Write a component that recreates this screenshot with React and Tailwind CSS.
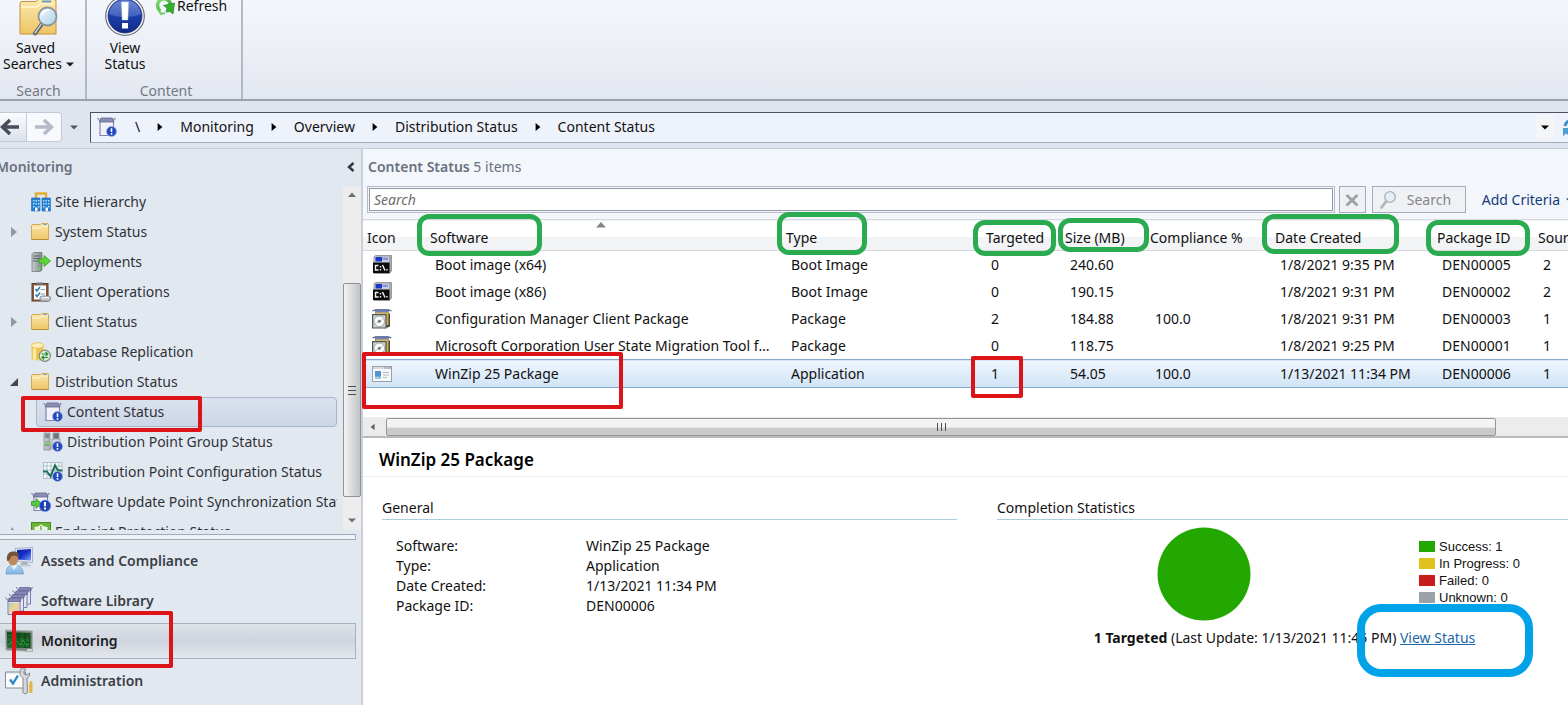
import React from "react";

/* ---------- shared defs and icons ---------- */

const IconDefs = () => (
  <svg className="absolute h-0 w-0" aria-hidden="true">
    <defs>
      <linearGradient id="folder" x1="0" y1="0" x2="0" y2="1">
        <stop offset="0" stopColor="#fbe9ac" />
        <stop offset="1" stopColor="#eec565" />
      </linearGradient>
      <linearGradient id="blueball" x1="0" y1="0" x2="0" y2="1">
        <stop offset="0" stopColor="#4c6fce" />
        <stop offset="0.5" stopColor="#1c3fae" />
        <stop offset="1" stopColor="#12297f" />
      </linearGradient>
      <linearGradient id="metal" x1="0" y1="0" x2="1" y2="0">
        <stop offset="0" stopColor="#c9cdd0" />
        <stop offset="1" stopColor="#7d8587" />
      </linearGradient>
      <linearGradient id="lens" x1="0" y1="0" x2="1" y2="1">
        <stop offset="0" stopColor="#f4fbff" />
        <stop offset="1" stopColor="#a9cfe6" />
      </linearGradient>
      <linearGradient id="green" x1="0" y1="0" x2="1" y2="1">
        <stop offset="0" stopColor="#8fe07a" />
        <stop offset="1" stopColor="#239c1c" />
      </linearGradient>
      <linearGradient id="screen" x1="0" y1="0" x2="1" y2="1">
        <stop offset="0" stopColor="#0a1c9c" />
        <stop offset="0.5" stopColor="#1730cc" />
        <stop offset="1" stopColor="#7fa6f6" />
      </linearGradient>
      <linearGradient id="shirt" x1="0" y1="0" x2="0" y2="1">
        <stop offset="0" stopColor="#b4d8f2" />
        <stop offset="1" stopColor="#7db2e2" />
      </linearGradient>
    </defs>
  </svg>
);

const Svg = ({ size = "h-5 w-5", box = "0 0 20 20", children }) => (
  <svg className={`${size} shrink-0`} viewBox={box} aria-hidden="true">
    {children}
  </svg>
);

const Badge = ({ cx = 14.5, cy = 14.5 }) => (
  <g>
    <circle cx={cx} cy={cy} r="5" fill="#2349bd" stroke="#9fb2e2" strokeWidth="0.7" />
    <path d={`M${cx} ${cy - 3.2}v3.6M${cx} ${cy + 1.6}v1.6`} stroke="#fff" strokeWidth="1.6" />
  </g>
);

const SiteIcon = () => (
  <Svg>
    <path d="M5 6V1.5h10V6" fill="none" stroke="#e0ae35" strokeWidth="2.4" />
    <path d="M0.5 6H9v13H0.5zM11 6h8.5v13H11z" fill="#2382d3" stroke="#1b66b0" strokeWidth="0.6" />
    <path d="M2 8h1.5v1.5H2zM4.5 8H6v1.5H4.5zM7 8h1.5v1.5H7zM2 11h1.5v1.5H2zM4.5 11H6v1.5H4.5zM7 11h1.5v1.5H7zM2 14h1.5v1.5H2zM7 14h1.5v1.5H7zM12 8h1.5v1.5H12zM14.5 8H16v1.5h-1.5zM17 8h1.5v1.5H17zM12 11h1.5v1.5H12zM14.5 11H16v1.5h-1.5zM17 11h1.5v1.5H17zM12 14h1.5v1.5H12zM17 14h1.5v1.5H17z" fill="#a9dcfa" />
    <path d="M4 15.500h2.500V19H4zM14.500 15.500H17V19h-2.500z" fill="#f4f8fc" />
  </Svg>
);

const FolderIcon = () => (
  <Svg>
    <path d="M0.500 4l1-1.500h8L10.500 1.500h6.500l0.500 1V17.500H0.500z" fill="url(#folder)" stroke="#cfa04a" strokeWidth="0.9" />
    <path d="M1 6h8l2-2h6" fill="none" stroke="#fff6d2" strokeWidth="1" />
    <path d="M12 2.600h4" stroke="#7ea6c4" strokeWidth="1.100" />
    <path d="M1 17.500h16.500" stroke="#b98c3b" />
  </Svg>
);

const DeployIcon = () => (
  <Svg>
    <path d="M1 2l2-1.500h8V18L9 19.500H1z" fill="url(#metal)" stroke="#767e80" strokeWidth="0.800" />
    <path d="M2 4h7M2 6.500h7M2 9h7" stroke="#5f6769" strokeWidth="1" />
    <circle cx="8" cy="16.500" r="1.200" fill="#66e234" />
    <path d="M8 7h5V3.500l6.500 5.500L13 14.500V11H8z" fill="#5fd636" stroke="#38a521" strokeWidth="0.900" />
  </Svg>
);

const ClipboardIcon = () => (
  <Svg>
    <rect x="1" y="1.500" width="16" height="17.500" fill="#8b5d40" stroke="#5f3b28" />
    <rect x="3" y="3.500" width="12" height="14" fill="#fbfcfd" />
    <path d="M6 0.500h6v2.500H6z" fill="#71777c" />
    <path d="M4.500 7l1.500 2 3-4M4.500 12.500l1.500 2 3-4" fill="none" stroke="#2b7cb5" strokeWidth="1.500" />
    <path d="M9.500 7.500H14M9.500 12H14" stroke="#90a4b0" />
    <rect x="9" y="14" width="10.500" height="5" rx="2" fill="#c6c9cc" stroke="#75797d" strokeWidth="0.800" />
    <path d="M10.500 15.500h7.500" stroke="#f5f6f6" />
  </Svg>
);

const DatabaseIcon = () => (
  <Svg>
    <path d="M0.500 3.500v12.500c0 3.200 12 3.200 12 0V3.500z" fill="#f0c750" />
    <path d="M2 5v12c1 .6 2 .9 3 1V6z" fill="#fbe9a4" />
    <ellipse cx="6.500" cy="3.500" rx="6" ry="2.800" fill="#fdf0b8" stroke="#e0b341" strokeWidth="0.700" />
    <circle cx="13.800" cy="13.800" r="5.600" fill="#dfeddc" stroke="#7b8a7a" strokeWidth="1.200" />
    <path d="M10.500 12h5.500M14.500 10l2.300 2-2.300 2M17 15.500h-5.500M13 13.700l-2 1.800 2 2" fill="none" stroke="#2c8c2e" strokeWidth="1.200" />
  </Svg>
);

const BoxShape = () => (
  <g>
    <path d="M0.500 1L4 5M18.500 1L15 5" stroke="#70709a" strokeWidth="1.100" />
    <path d="M3 4.500h13.500v14H3z" fill="#f2f2fa" stroke="#8585ac" strokeWidth="1.200" />
    <path d="M4 1h11.500l1.500 4H2.500z" fill="#8c8cb5" stroke="#67678f" strokeWidth="0.800" />
  </g>
);

const ContentStatusIcon = () => (
  <Svg>
    <BoxShape />
    <Badge />
  </Svg>
);

const GroupStatusIcon = () => (
  <Svg>
    <path d="M1 1h6v9H1zM10 1h6v9h-6zM1 11h6.500v7H1z" fill="url(#metal)" stroke="#7d8587" strokeWidth="0.700" />
    <path d="M2 3h4M2 5h4M11 3h4M11 5h4M2 13h4" stroke="#4f5658" />
    <path d="M1 10h7v3H1z" fill="#84c77a" />
    <path d="M9 7h8v10H9z" fill="#d4d8dc" stroke="#8d969b" strokeWidth="0.800" />
    <Badge />
  </Svg>
);

const ConfigStatusIcon = () => (
  <Svg>
    <path d="M0.500 0.500h18.500v16H0.500z" fill="#f5f9fa" stroke="#9fb4bd" strokeWidth="0.800" />
    <path d="M4 .5v16M8 .5v16M12 .5v16M16 .5v16M.5 4h18.500M.5 8h18.500M.5 12h18.500" stroke="#9fb8c1" strokeWidth="0.800" />
    <path d="M0 9.500h4l3.500 5L12 3.500l3 5h4.500" fill="none" stroke="#1f6f58" strokeWidth="2" />
    <Badge />
  </Svg>
);

const SyncStatusIcon = () => (
  <Svg>
    <BoxShape />
    <path d="M0.500 9.500h4.500V6.500l5.500 5-5.500 5v-3H0.500z" fill="#56ca3c" stroke="#2f9824" strokeWidth="0.800" />
    <circle cx="14" cy="13.800" r="5.800" fill="#1f45b8" stroke="#7f98dc" strokeWidth="0.700" />
    <path d="M14 10v4.300M14 15.600v1.900" stroke="#fff" strokeWidth="2" />
  </Svg>
);

const EndpointIcon = () => (
  <Svg>
    <rect x="0.500" y="0.500" width="19" height="19" fill="#6cb33a" stroke="#478c22" />
    <path d="M3.500 5c3 0 5-1.500 6.500-2.500C11.500 3.500 13.500 5 16.500 5v7c0 4-6.500 6-6.500 6s-6.500-2-6.500-6z" fill="#eef7e6" />
    <path d="M10 4v14M4 10h12" stroke="#6cb33a" strokeWidth="1.500" />
  </Svg>
);

const BootIcon = () => (
  <Svg>
    <path d="M2 1.500L4 0.500h15.500V16l-2 2.500H2z" fill="#a5a9ae" stroke="#7c8085" strokeWidth="0.700" />
    <path d="M2.500 1.500h14.500v7H2.500z" fill="#c9cedb" />
    <path d="M3.500 2H10v4.500H3.500z" fill="#1c36c4" />
    <path d="M10.500 2.500H16v2.500h-5.500z" fill="#8494d8" />
    <path d="M1 7.500h16.500v10.500H1z" fill="#0a0a0a" />
    <path d="M6.500 10.500H3.500v4.500h3M8.500 11v1.500M8.500 14v1.500M10.500 10l2.500 5.500M15 14v1.500" fill="none" stroke="#f3f3f3" strokeWidth="1.400" />
  </Svg>
);

const PackageIcon = () => (
  <Svg>
    <path d="M0.500 2l3-1.200h13l3 1.200" fill="none" stroke="#56628c" strokeWidth="1.300" />
    <path d="M3.500 1h13v7h-13z" fill="#7486b8" stroke="#5a6892" strokeWidth="0.700" />
    <path d="M13.500 4.500h4.500V17.500L14.500 19z" fill="#3f4c48" />
    <path d="M14 3.500h2.500V16H14z" fill="#d9a93c" />
    <path d="M3.500 3.500h13v2h-13z" fill="#d9b75a" />
    <path d="M0.600 5.600h13.400v13.400H0.600z" fill="#cdd3d1" stroke="#4f5956" strokeWidth="1.200" />
    <circle cx="7.300" cy="12.300" r="5.300" fill="#fafbfb" stroke="#94a09d" strokeWidth="0.800" />
    <path d="M7.300 12.300l4.500-2.500M7.300 12.300L3 15" stroke="#bcd6c8" />
    <circle cx="7.300" cy="12.300" r="1.500" fill="#6f7978" />
  </Svg>
);

const AppIcon = () => (
  <Svg>
    <rect x="0.500" y="2.500" width="19" height="15" fill="#f6f8fa" stroke="#9aa1a9" />
    <path d="M1 4h18" stroke="#d4d9de" strokeWidth="2" />
    <path d="M12.500 4h1.500M15 4h1.500M17.500 4H19" stroke="#7b838c" />
    <rect x="3" y="7" width="6" height="8" fill="#4c94c9" />
    <path d="M3 12.500h6V15H3z" fill="#9cc6e2" />
    <path d="M11 8.500h6M11 11h6M11 13.500h4" stroke="#b6bdc4" />
  </Svg>
);

const AssetsIcon = () => (
  <Svg size="h-7 w-7" box="0 0 28 28">
    <path d="M10 1.500L27.500 0.500V15.500L12 14z" fill="#e2e7f2" stroke="#9ba6bc" strokeWidth="0.800" />
    <path d="M12 3l14-1V13.500L12 12.500z" fill="url(#screen)" />
    <path d="M17 15h5l1 3h-8z" fill="#a8afbd" />
    <path d="M15 18.500h11" stroke="#c5cad4" strokeWidth="2" />
    <path d="M1 27c0-7 3-9 8-9 6 0 9 3 9.500 9z" fill="url(#shirt)" stroke="#6b9cc9" strokeWidth="0.700" />
    <path d="M6 18l3 5 3.500-5z" fill="#eaf4fc" />
    <ellipse cx="8" cy="12" rx="5.200" ry="6.500" fill="#bd895d" />
    <path d="M2 14C1 6.500 4.500 4.500 8.500 4.500c4 0 6 2.500 5 6-2.500-2-5.500-2.500-7.500-1-.5 3-2 4-4 4.500z" fill="#74523d" />
  </Svg>
);

const LibraryBox = ({ x, y }) => (
  <g transform={`translate(${x} ${y})`}>
    <path d="M0 0l3 3.500M16.500 0l-2 3.500" stroke="#6f6f9c" />
    <path d="M2.500 3.500h12V17h-12z" fill="#e4e4f3" stroke="#7d7daa" />
    <path d="M3.500 0.500h11l.5 3.500H2.500z" fill="#8585b4" stroke="#5e5e90" strokeWidth="0.700" />
  </g>
);

const LibraryIcon = () => (
  <Svg size="h-7 w-7" box="0 0 28 28">
    <LibraryBox x={11} y={0} />
    <LibraryBox x={7.500} y={3.500} />
    <LibraryBox x={4} y={7} />
    <LibraryBox x={0.500} y={10.500} />
    <path d="M4 16h10v10l-5-3-5 4z" fill="#eacf9c" />
    <path d="M4 16h5l-5 6z" fill="#b5d6a4" />
  </Svg>
);

const MonitorIcon = () => (
  <Svg size="h-7 w-7" box="0 0 28 28">
    <path d="M0.500 3l27 1v20.500L1 23z" fill="#7c8580" stroke="#a9b1ad" />
    <path d="M2 5l23.500 1v15L2.500 20.500z" fill="#155021" />
    <path d="M3 8l5-1v4l4-2v6l5-7 2 4 5-4v12H3z" fill="#1f7a30" opacity="0.700" />
    <path d="M8 5v15.500M14 5.500v15M20 6v15M2 10h23.500M2 15.500h23.500" stroke="#123f1a" strokeWidth="0.800" />
    <path d="M3 18l3-3 2 3 4-4 3 4 3-5 3 5 3-2" fill="none" stroke="#2f9a3f" strokeWidth="1" />
    <path d="M22 23h5" stroke="#e8ecea" strokeWidth="1.500" />
  </Svg>
);

const AdminIcon = () => (
  <Svg size="h-7 w-7" box="0 0 28 28">
    <path d="M0.500 5h20v16h-20z" fill="#fafcfd" stroke="#858c94" />
    <path d="M1 5.500h19" stroke="#b6bdc5" strokeWidth="1.600" />
    <path d="M5 12.500l3 4 5-8" fill="none" stroke="#2b86c4" strokeWidth="2.300" />
    <path d="M26 14c2 0 1.500 3 1.500 12h-3c-.5-7-.5-12 1.500-12z" fill="#e6b441" />
    <path d="M16 2c2-1.500 4-1 5 .5l-2 1.500v3l3 1 2.500-2c.5 3-1 4.500-2.500 5l.5 14.500c-1 1.700-4 1.700-4.500 0L18 11c-3-1.500-4-5-2-9z" fill="#d5d7da" stroke="#797d83" strokeWidth="0.900" />
  </Svg>
);

const SavedSearchIcon = () => (
  <Svg size="h-10 w-10" box="0 0 40 40">
    <path d="M1 8l1-2.500h15L19 3h17l1 2v33H1z" fill="url(#folder)" stroke="#c3933d" />
    <path d="M2 11h16l3-3h15" fill="none" stroke="#fff6cf" strokeWidth="1.500" />
    <path d="M23 5.500h9" stroke="#6f9dc0" strokeWidth="2" />
    <path d="M22.500 28.500L16 37.500" stroke="#5e6468" strokeWidth="4" strokeLinecap="round" />
    <path d="M22 28.500L16 37" stroke="#c6ccd0" strokeWidth="1.500" strokeLinecap="round" />
    <circle cx="28.500" cy="20.500" r="9" fill="url(#lens)" stroke="#8a959c" strokeWidth="1.800" />
    <path d="M23 19c1-4 4-5 7-5" fill="none" stroke="#fff" strokeWidth="1.800" />
  </Svg>
);

const BigStatusIcon = () => (
  <Svg size="h-10 w-10" box="0 0 40 40">
    <circle cx="20" cy="20" r="19.300" fill="#fafbfd" stroke="#6b6f78" strokeWidth="1.200" />
    <circle cx="20" cy="20" r="17" fill="url(#blueball)" stroke="#1a2f78" strokeWidth="0.800" />
    <path d="M4 18C6 8 12 4.500 20 4.500S34 8 36 18c-8 4-24 4-32 0z" fill="#fff" opacity="0.180" />
    <path d="M16.500 6h7L22.800 24h-5.600z" fill="#fff" stroke="#cfd6ea" strokeWidth="0.500" />
    <rect x="17" y="27" width="6" height="5.500" fill="#fff" />
  </Svg>
);

const RefreshGreen = () => (
  <Svg>
    <path d="M5 15C1.500 11.500 1.500 6 6 3.500c4-2 8.500 0 9.500 5" fill="none" stroke="url(#green)" strokeWidth="3.500" />
    <path d="M8.500 9.500L19.500 7l-1.500 11-3-2.500-4 .5 1-4z" fill="#35ae2c" stroke="#1e8c1c" strokeWidth="0.700" />
    <path d="M3 13l3 5 4-1" fill="none" stroke="#74cf62" strokeWidth="2" />
  </Svg>
);

const RefreshBlue = () => (
  <Svg>
    <path d="M3 9C4 4 9 2 14 4" fill="none" stroke="#3d8fc9" strokeWidth="3" />
    <path d="M1 11h8l-3 3c3 3 7 3 10 1v3c-5 2-9 1-12-1.500L1 19z" fill="#4b9fd4" />
  </Svg>
);

const Arrow = ({ dir, color = "#1b1b1b", size = "h-2 w-2" }) => {
  const d = {
    right: "M2 0l6 5-6 5z",
    down: "M0 3h10L5 8z",
    up: "M0 7.500h10L5 2z",
    left: "M7 1L2 5l5 4z",
    corner: "M9 1v8H1z",
  }[dir];
  return (
    <Svg size={size} box="0 0 10 10">
      <path d={d} fill={color} />
    </Svg>
  );
};

/* hand-drawn highlight frames laid over the content */
const Mark = ({ className }) => (
  <span aria-hidden="true" className={`pointer-events-none absolute z-10 ${className}`} />
);
const GREEN = "rounded-xl border-[5px] border-[#2aab50]";
const RED = "rounded-xs border-4 border-[#dc1418]";

/* ---------- data ---------- */

const tree = [
  { label: "Site Hierarchy", icon: SiteIcon },
  { label: "System Status", icon: FolderIcon, arrow: "right" },
  { label: "Deployments", icon: DeployIcon },
  { label: "Client Operations", icon: ClipboardIcon },
  { label: "Client Status", icon: FolderIcon, arrow: "right" },
  { label: "Database Replication", icon: DatabaseIcon },
  { label: "Distribution Status", icon: FolderIcon, arrow: "corner" },
  { label: "Content Status", icon: ContentStatusIcon, child: true, selected: true },
  { label: "Distribution Point Group Status", icon: GroupStatusIcon, child: true },
  { label: "Distribution Point Configuration Status", icon: ConfigStatusIcon, child: true },
  { label: "Software Update Point Synchronization Status", icon: SyncStatusIcon },
  { label: "Endpoint Protection Status", icon: EndpointIcon, arrow: "right" },
];

const spaces = [
  { label: "Assets and Compliance", icon: AssetsIcon },
  { label: "Software Library", icon: LibraryIcon },
  { label: "Monitoring", icon: MonitorIcon, selected: true },
  { label: "Administration", icon: AdminIcon },
];

const columns = [
  { label: "Icon", width: "w-[60px]" },
  { label: "Software", width: "w-[356px]", mark: "-left-1.5 -top-1.5 h-[42px] w-[125px]", sorted: true },
  { label: "Type", width: "w-[200px]", mark: "-left-0.5 -top-2 h-[43px] w-[90px]" },
  { label: "Targeted", width: "w-[79px]", mark: "-left-1.5 top-0 h-9 w-[83px]" },
  { label: "Size (MB)", width: "w-[85px]", mark: "left-0 -top-0.5 h-[34px] w-[91px]" },
  { label: "Compliance %", width: "w-[125px]" },
  { label: "Date Created", width: "w-[162px]", mark: "-left-1.5 -top-1.5 h-10 w-[137px]" },
  { label: "Package ID", width: "w-[101px]", mark: "-left-1 top-0 h-9 w-[104px]" },
  { label: "Source Version", width: "w-[120px]" },
];

const rows = [
  [BootIcon, "Boot image (x64)", "Boot Image", "0", "240.60", "", "1/8/2021 9:35 PM", "DEN00005", "2"],
  [BootIcon, "Boot image (x86)", "Boot Image", "0", "190.15", "", "1/8/2021 9:31 PM", "DEN00002", "2"],
  [PackageIcon, "Configuration Manager Client Package", "Package", "2", "184.88", "100.0", "1/8/2021 9:31 PM", "DEN00003", "1"],
  [PackageIcon, "Microsoft Corporation User State Migration Tool for Windows", "Package", "0", "118.75", "", "1/8/2021 9:25 PM", "DEN00001", "1"],
  [AppIcon, "WinZip 25 Package", "Application", "1", "54.05", "100.0", "1/13/2021 11:34 PM", "DEN00006", "1"],
];

const facts = [
  ["Software:", "WinZip 25 Package"],
  ["Type:", "Application"],
  ["Date Created:", "1/13/2021 11:34 PM"],
  ["Package ID:", "DEN00006"],
];

const legend = [
  ["Success: 1", "bg-[#22a800]"],
  ["In Progress: 0", "bg-[#dfc31c]"],
  ["Failed: 0", "bg-[#c61c1c]"],
  ["Unknown: 0", "bg-[#9aa1a8]"],
];

/* ---------- sections ---------- */

const Ribbon = () => (
  <header className="flex h-[101px] shrink-0 overflow-hidden border-b-2 border-[#9aa1ae] bg-linear-to-b from-[#f3f6fb] via-[#eceff6] to-[#e3e7ef] leading-4">
    <section className="flex w-[87px] flex-col justify-end border-r-2 border-[#b3bac6] pr-2">
      <button type="button" className="flex flex-col items-center">
        <SavedSearchIcon />
        <span className="mt-1 pr-1.5">Saved</span>
        <span className="flex items-center gap-1 whitespace-nowrap">
          Searches <Arrow dir="down" />
        </span>
      </button>
      <h2 className="mt-[11px] text-center text-[#727885]">Search</h2>
    </section>
    <section className="flex w-[156px] flex-col justify-end border-r-2 border-[#b3bac6]">
      <div className="flex items-start">
        <button type="button" className="ml-4 flex w-11 flex-col items-center">
          <BigStatusIcon />
          <span className="mt-1">View</span>
          <span>Status</span>
        </button>
        <button type="button" className="ml-2 flex items-center gap-0.5">
          <RefreshGreen />
          Refresh
        </button>
      </div>
      <h2 className="mt-[11px] pl-1 text-center text-[#727885]">Content</h2>
    </section>
  </header>
);

const AddressBar = () => (
  <nav className="flex h-12 shrink-0 items-center overflow-hidden border-b border-[#c6ccd8] bg-[#dfe5ee] pt-[5px]" aria-label="Location">
    <button type="button" aria-label="Back" className="flex h-[30px] w-[27px] items-center border border-l-0 border-[#c2c9d6] bg-linear-to-b from-[#fafbfd] to-[#dce2ec]">
      <Svg>
        <path d="M19 10H3M10 3L2.500 10l7.500 7" fill="none" stroke="#484b5c" strokeWidth="3.500" />
      </Svg>
    </button>
    <button type="button" aria-label="Forward" className="flex h-[30px] w-[35px] items-center justify-center rounded-r border border-l-0 border-[#c2c9d6] bg-[#f7f9fc]">
      <Svg>
        <path d="M1 10h16M10 3l7.500 7-7.500 7" fill="none" stroke="#b4bac8" strokeWidth="3.500" />
      </Svg>
    </button>
    <button type="button" aria-label="History" className="flex w-7 items-center justify-center pr-1">
      <Arrow dir="down" color="#4f5464" />
    </button>
    <div className="flex h-[31px] flex-1 items-center border border-r-0 border-t-[#4f5060] border-b-[#a4acba] border-l-[#4f5060] bg-[#eef2fa] pl-1.5">
      <ContentStatusIcon />
      <span className="ml-[18px]">{"\\"}</span>
      {["Monitoring", "Overview", "Distribution Status", "Content Status"].map((crumb) => (
        <span key={crumb} className="flex items-center">
          <span className="mx-4 flex items-center"><Arrow dir="right" color="#000" /></span>
          <a href={`#${crumb.replaceAll(" ", "-")}`}>{crumb}</a>
        </span>
      ))}
      <button type="button" aria-label="Show locations" className="mr-2 ml-auto flex h-6 w-[18px] items-center justify-center bg-[#f4f5f7]">
        <Arrow dir="down" color="#000" />
      </button>
      <button type="button" aria-label="Reload" className="-mr-3.5 flex">
        <RefreshBlue />
      </button>
    </div>
  </nav>
);

const Sidebar = () => (
  <aside className="flex w-[363px] shrink-0 flex-col border-r-2 border-[#c9d0dc] bg-[#e2e8f0] text-[#2f3238]">
    <div className="flex h-9 items-center justify-between pr-[5px]">
      <h2 className="-ml-1 font-semibold text-[#6a7180]">Monitoring</h2>
      <button type="button" aria-label="Collapse pane" className="flex">
        <Svg size="h-2.5 w-2.5" box="0 0 10 10">
          <path d="M7.500 1L3 5l4.500 4" fill="none" stroke="#33363f" strokeWidth="2.400" />
        </Svg>
      </button>
    </div>
    <div className="flex h-[345px] pt-0.5">
      <ul className="h-full min-w-0 flex-1 overflow-hidden pr-1.5">
        {tree.map((node) => (
          <li key={node.label} className="relative flex h-[30px] items-center">
            <span className="flex w-[31px] shrink-0 justify-center pr-1">
              {node.arrow && (
                <Arrow dir={node.arrow} size="h-2.5 w-2.5" color={node.arrow === "corner" ? "#43464c" : "#9298a2"} />
              )}
            </span>
            <a
              href={`#${node.label.replaceAll(" ", "-")}`}
              className={`flex h-[30px] min-w-0 items-center gap-1 overflow-hidden whitespace-nowrap ${node.child ? "flex-1" : ""} ${
                node.selected ? "ml-[5px] rounded border border-[#a9b5ca] bg-linear-to-b from-[#dbe2ee] to-[#cdd6e7] pl-1.5" : ""
              } ${node.child && !node.selected ? "pl-3" : ""}`}
            >
              <node.icon />
              {node.label}
            </a>
            {node.selected && <Mark className={`-top-px left-[21px] h-9 w-[181px] ${RED}`} />}
          </li>
        ))}
      </ul>
      <div className="flex w-[18px] flex-col items-center bg-[#ededee]" aria-hidden="true">
        <span className="flex h-4 items-center"><Arrow dir="up" color="#6c6f74" /></span>
        <span className="mt-20 flex h-[214px] w-full flex-col items-center justify-center gap-[3px] rounded-xs border border-[#8f9296] bg-linear-to-r from-[#f4f4f5] via-[#dadbdc] to-[#c3c4c6]">
          <i className="h-px w-2 bg-[#4b4d50]" />
          <i className="h-px w-2 bg-[#4b4d50]" />
          <i className="h-px w-2 bg-[#4b4d50]" />
        </span>
        <span className="mt-auto flex h-5 items-center"><Arrow dir="down" color="#6c6f74" /></span>
      </div>
    </div>
    <div className="mt-1 mr-[5px] h-[6px] border border-l-0 border-[#a3aab8] bg-[#eef1f6]" />
    <ul className="mt-px mr-[5px]">
      {spaces.map((space) => (
        <li key={space.label} className="relative flex h-10 items-center">
          <a
            href={`#${space.label.replaceAll(" ", "-")}`}
            className={`flex h-9 flex-1 items-center gap-2 pl-[5px] font-semibold ${
              space.selected
                ? "border border-l-0 border-[#a7b1c2] bg-linear-to-b from-[#dfe3ea] via-[#cfd4dd] to-[#e3e7ed] text-[#1b1d22]"
                : "text-[#3b3f47]"
            }`}
          >
            <space.icon />
            {space.label}
          </a>
          {space.selected && <Mark className={`-top-2.5 left-3 h-[57px] w-[161px] ${RED}`} />}
        </li>
      ))}
    </ul>
  </aside>
);

const SearchRow = () => (
  <form className="flex h-[35px] items-center pb-1 pl-1" onSubmit={(e) => e.preventDefault()}>
    <div className="min-w-0 flex-1 border border-[#b6bbc6] p-px">
      <input
        type="text"
        aria-label="Search"
        placeholder="Search"
        className="block h-[23px] w-full border border-[#9499a6] bg-white px-1 italic placeholder:text-[#6d6d6d]"
      />
    </div>
    <button type="button" aria-label="Clear" className="ml-1 flex h-[27px] w-[27px] items-center justify-center border border-[#a5abb8] bg-[#f0f1f4]">
      <Svg size="h-4 w-4" box="0 0 16 16">
        <path d="M2.500 3l11 10.500M13.500 3l-11 10.500" stroke="#a0a1a5" strokeWidth="3" />
      </Svg>
    </button>
    <button type="submit" className="ml-1.5 flex h-[27px] w-[94px] items-center gap-2 border border-[#a5abb8] bg-[#f0f1f4] pl-1.5 text-[#868686]">
      <Svg>
        <path d="M7 11.500L2.500 17.500" stroke="#b3b4b6" strokeWidth="2.800" strokeLinecap="round" />
        <circle cx="11" cy="7" r="5.300" fill="#e3eef6" stroke="#a9b4bc" strokeWidth="1.300" />
      </Svg>
      Search
    </button>
    <button type="button" className="-mr-1.5 ml-4 flex items-center gap-1.5 whitespace-nowrap text-[#17397c]">
      Add Criteria <Arrow dir="down" color="#17397c" />
    </button>
  </form>
);

const ContentTable = () => (
  <table className="w-[1288px] table-fixed border-collapse text-left">
    <thead>
      <tr className="h-[31px] border-t border-b border-[#d5d8dd] bg-linear-to-b from-white from-55% to-[#f1f3f5] to-55%">
        {columns.map((col) => (
          <th key={col.label} scope="col" className={`relative pt-1.5 font-normal whitespace-nowrap ${col.width} ${col.label === "Icon" ? "pl-1" : "pl-[7px]"}`}>
            {col.label}
            {col.sorted && (
              <span className="absolute inset-x-0 top-0 flex justify-center">
                <Arrow dir="up" color="#858585" size="h-2.5 w-2.5" />
              </span>
            )}
            {col.mark && <Mark className={`${GREEN} ${col.mark}`} />}
          </th>
        ))}
      </tr>
      <tr className="h-px" aria-hidden="true" />
    </thead>
    <tbody>
      {rows.map(([RowIcon, ...cells]) => {
        const selected = cells[0].startsWith("WinZip");
        return (
          <tr
            key={cells[0]}
            className={`leading-5 ${selected ? "h-7 border-y border-[#83a9cd] bg-linear-to-b from-[#eff6fd] to-[#d0e4f7]" : "h-[27px]"}`}
          >
            <td className="relative pl-[9px]">
              <RowIcon />
              {selected && <Mark className={`-top-2 -left-px h-[57px] w-[261px] ${RED}`} />}
            </td>
            {cells.map((cell, i) => (
              <td key={columns[i + 1].label} className="relative pr-1.5 pl-3">
                <span className="block truncate">{cell}</span>
                {selected && i === 2 && <Mark className={`-top-1 -left-2 h-[42px] w-[52px] ${RED}`} />}
              </td>
            ))}
          </tr>
        );
      })}
    </tbody>
  </table>
);

const HorizontalScroll = () => (
  <div className="mt-[29px] flex h-[21px] shrink-0 items-center border-b-2 border-[#b9babc] bg-[#ececed]" aria-hidden="true">
    <span className="flex w-[23px] items-center justify-center pr-1"><Arrow dir="left" color="#606266" /></span>
    <span className="mr-[72px] flex h-[18px] flex-1 items-center justify-center gap-[3px] rounded-xs border border-[#939598] bg-linear-to-b from-[#f3f3f4] from-50% to-[#c9cacc] to-60%">
      <i className="h-2 w-px bg-[#4b4d50]" />
      <i className="h-2 w-px bg-[#4b4d50]" />
      <i className="h-2 w-px bg-[#4b4d50]" />
    </span>
  </div>
);

const Details = () => (
  <section className="flex-1 bg-white">
    <h2 className="h-[39px] border-b border-[#eff0f1] pt-2 pl-4 text-[17px] leading-7 font-semibold text-black">WinZip 25 Package</h2>
    <div className="-mr-1 grid grid-cols-2 gap-10 pt-5 pl-[19px]">
      <section>
        <h3 className="border-b border-[#a9cfdf] leading-[22px]">General</h3>
        <dl className="mt-4 grid grid-cols-[190px_1fr] pl-3.5 leading-5">
          {facts.map(([name, value]) => (
            <React.Fragment key={name}>
              <dt>{name}</dt>
              <dd>{value}</dd>
            </React.Fragment>
          ))}
        </dl>
      </section>
      <section>
        <h3 className="border-b border-[#a9cfdf] leading-[22px]">Completion Statistics</h3>
        <div className="mt-[7px] flex pl-40">
          <svg className="h-[94px] w-[94px]" viewBox="0 0 94 94" role="img" aria-label="Success: 1">
            <circle cx="47" cy="47" r="46.500" fill="#22a800" />
          </svg>
          <ul className="mt-[11px] ml-[168px] font-['Liberation_Sans',sans-serif] text-[13px] leading-[17px]">
            {legend.map(([label, color]) => (
              <li key={label} className="flex items-center gap-1">
                <i className={`h-[11px] w-4 ${color}`} />
                {label}
              </li>
            ))}
          </ul>
        </div>
        <p className="relative mt-[7px] text-center leading-5">
          <b>1 Targeted</b> (Last Update: 1/13/2021 11:45 PM){" "}
          <a href="#view-status" className="relative inline-block text-[#1b67a8] underline">
            View Status
            <Mark className="-top-6 -left-[43px] h-[73px] w-44 rounded-3xl border-8 border-[#00a2e8]" />
          </a>
        </p>
      </section>
    </div>
  </section>
);

export default function App() {
  return (
    <div className="relative flex h-screen flex-col overflow-hidden bg-white font-['Noto_Sans','Open_Sans',sans-serif] text-sm text-[#111]">
      <IconDefs />
      <Ribbon />
      <AddressBar />
      <div className="flex min-h-0 flex-1">
        <Sidebar />
        <main className="flex min-w-0 flex-1 flex-col">
          <div className="bg-[#f3f6fb]">
            <h1 className="h-[35px] pl-[5px] leading-[35px] text-[#6a7180]">
              <span className="font-semibold">Content Status</span> 5 items
            </h1>
            <SearchRow />
          </div>
          <ContentTable />
          <HorizontalScroll />
          <Details />
        </main>
      </div>
    </div>
  );
}
